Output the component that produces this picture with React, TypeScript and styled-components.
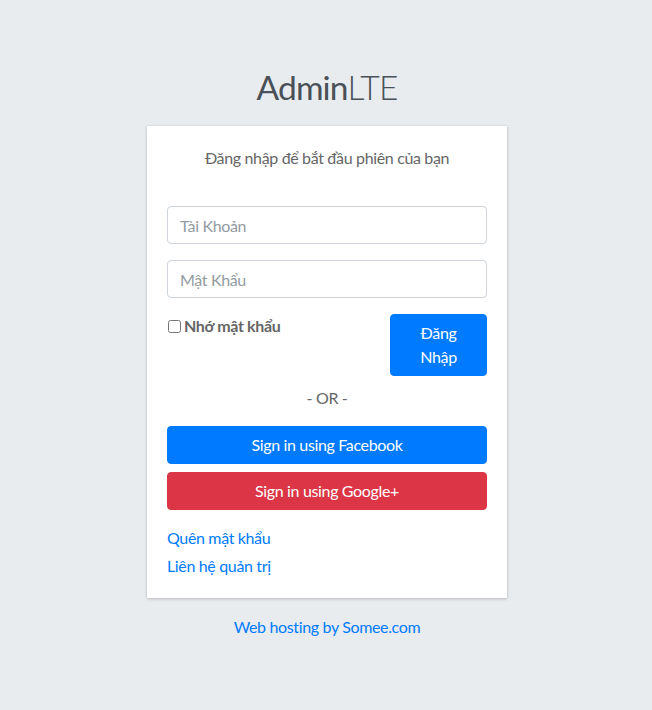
import React from "react";
import styled, { createGlobalStyle } from "styled-components";

const Global = createGlobalStyle`
  html, body { margin: 0; padding: 0; }
  body {
    background: #e9ecef;
    font-family: Lato, "Liberation Sans", sans-serif;
    font-size: 16px;
    line-height: 1.5;
    letter-spacing: -0.35px;
    color: #212529;
  }
  * { box-sizing: border-box; }
`;

const Page = styled.div`
  min-height: 710px;
  display: flex;
  flex-direction: column;
  align-items: center;
  padding: 62px 0 0 2px;
`;

const LoginBox = styled.div`
  width: 360px;
`;

const Logo = styled.div`
  text-align: center;
  font-size: 33.6px;
  line-height: 50px;
  font-weight: 300;
  letter-spacing: -0.9px;
  color: #495057;
  margin-bottom: 14px;
`;

const LogoStrong = styled.span`
  font-weight: 400;
`;

const Card = styled.div`
  background: #fff;
  box-shadow: 0 0 1px rgba(0, 0, 0, 0.125), 0 1px 3px rgba(0, 0, 0, 0.2);
  padding: 20px;
  color: #666;
`;

const Message = styled.p`
  margin: 0 0 16px;
  padding: 0 20px 20px;
  text-align: center;
`;

const Input = styled.input`
  display: block;
  width: 100%;
  height: 38px;
  padding: 6px 12px;
  margin: 0 0 16px;
  font: inherit;
  letter-spacing: inherit;
  color: #495057;
  border: 1px solid #ced4da;
  border-radius: 4px;
  background: #fff;
  &::placeholder { color: #939ba2; }
`;

const Row = styled.div`
  display: flex;
  align-items: flex-start;
  justify-content: space-between;
`;

const CheckLabel = styled.label`
  display: flex;
  align-items: center;
  gap: 3px;
  font-weight: 700;
  color: #666;
  line-height: 24px;
`;

const Check = styled.input`
  width: 13px;
  height: 13px;
  margin: 0 0 0 1px;
`;

const Button = styled.button<{ $bg: string; $block?: boolean }>`
  display: block;
  width: ${(p) => (p.$block ? "100%" : "97px")};
  padding: 6px 12px;
  font: inherit;
  letter-spacing: inherit;
  line-height: 24px;
  color: #fff;
  background: ${(p) => p.$bg};
  border: 1px solid ${(p) => p.$bg};
  border-radius: 4px;
  text-align: center;
  cursor: pointer;
`;

const Social = styled.div`
  margin: 10px 0 16px;
  text-align: center;
  display: flex;
  flex-direction: column;
  gap: 8px;
`;

const Or = styled.p`
  margin: 0 0 8px;
`;

const LinkLine = styled.p<{ $mb: number }>`
  margin: 0 0 ${(p) => p.$mb}px;
`;

const A = styled.a`
  color: #007bff;
  text-decoration: none;
`;

const Footer = styled.div`
  margin-top: 17px;
  text-align: center;
`;

export default function App() {
  return (
    <>
      <Global />
      <Page>
        <LoginBox>
          <Logo>
            <LogoStrong>Admin</LogoStrong>LTE
          </Logo>
          <Card>
            <Message>Đăng nhập để bắt đầu phiên của bạn</Message>
            <Input placeholder="Tài Khoản" />
            <Input type="password" placeholder="Mật Khẩu" />
            <Row>
              <CheckLabel>
                <Check type="checkbox" />
                Nhớ mật khẩu
              </CheckLabel>
              <Button $bg="#007bff">Đăng Nhập</Button>
            </Row>
            <Social>
              <Or>- OR -</Or>
              <Button $bg="#007bff" $block>Sign in using Facebook</Button>
              <Button $bg="#dc3545" $block>Sign in using Google+</Button>
            </Social>
            <LinkLine $mb={4}>
              <A href="#">Quên mật khẩu</A>
            </LinkLine>
            <LinkLine $mb={0}>
              <A href="#">Liên hệ quản trị</A>
            </LinkLine>
          </Card>
          <Footer>
            <A href="#">Web hosting by Somee.com</A>
          </Footer>
        </LoginBox>
      </Page>
    </>
  );
}
